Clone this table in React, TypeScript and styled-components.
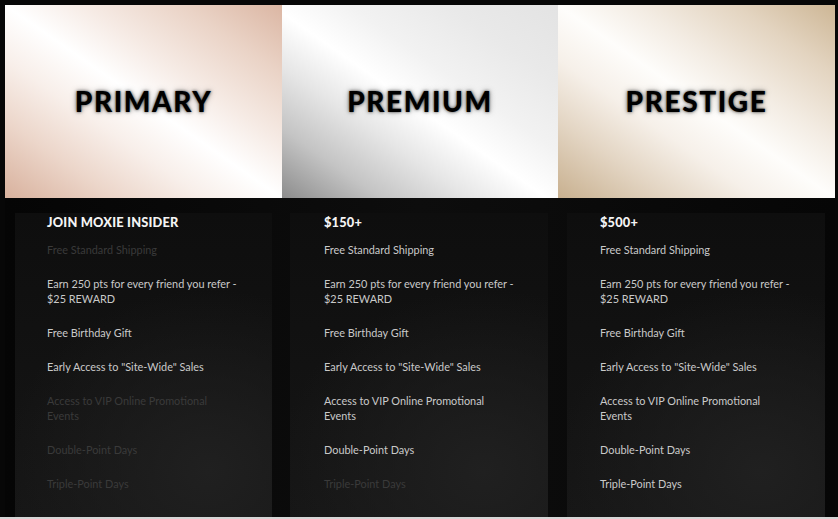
import * as React from 'react';
import styled, { createGlobalStyle } from 'styled-components';

const GlobalStyle = createGlobalStyle`
    html, body {
        margin: 0;
        padding: 0;
        background: #d6d6d6;
    }
`;

const Frame = styled.div`
    width: 838px;
    height: 517px;
    box-sizing: border-box;
    padding: 5px 3px 0 5px;
    background: #070707;
    overflow: hidden;
    display: flex;
    flex-direction: column;
`;

const Banners = styled.div`
    display: grid;
    grid-template-columns: 277px 276px 277px;
    height: 193px;
`;

const Banner = styled.div<{ $bg: string }>`
    display: flex;
    align-items: center;
    justify-content: center;
    background: ${p => p.$bg};
`;

const BannerTitle = styled.div`
    font-family: Lato, "Noto Sans", sans-serif;
    font-weight: 900;
    font-size: 28px;
    letter-spacing: 1.6px;
    color: #000;
    text-shadow: 0 0 3px rgba(0, 0, 0, 0.7), 0 0 6px rgba(0, 0, 0, 0.35);
    margin-bottom: 1px;
`;

const Cards = styled.div`
    flex: 1;
    display: grid;
    grid-template-columns: 277px 276px 277px;
    padding-top: 15px;
    background: linear-gradient(to right, #050505, #0d0d0d 50%, #060606);
`;

const CardSlot = styled.div<{ $left: number }>`
    padding-left: ${p => p.$left}px;
    padding-right: 10px;
    display: flex;
`;

const Card = styled.div<{ $pad: number }>`
    flex: 1;
    padding: 1px 10px 0 ${p => p.$pad}px;
    background:
        radial-gradient(ellipse 80% 60% at 75% 85%, #202020 0%, rgba(24, 24, 24, 0) 100%),
        linear-gradient(to bottom, #0e0e0e, #161616);
    font-family: Lato, "Noto Sans", sans-serif;
`;

const CardTitle = styled.div`
    font-weight: 900;
    font-size: 12.8px;
    letter-spacing: 0.2px;
    color: #f4f4f4;
    line-height: 16px;
    margin-bottom: 12px;
`;

const Perks = styled.ul`
    list-style: none;
    margin: 0;
    padding: 0;
    display: flex;
    flex-direction: column;
    gap: 19px;
`;

const Perk = styled.li<{ $off?: boolean }>`
    font-size: 10.9px;
    line-height: 15px;
    color: ${p => (p.$off ? '#3a3a3a' : '#c9c9c9')};
    max-width: 193px;
`;

const PERKS = [
    'Free Standard Shipping',
    'Earn 250 pts for every friend you refer - $25 REWARD',
    'Free Birthday Gift',
    'Early Access to "Site-Wide" Sales',
    'Access to VIP Online Promotional Events',
    'Double-Point Days',
    'Triple-Point Days',
];

const tiers = [
    {
        name: 'PRIMARY',
        title: 'JOIN MOXIE INSIDER',
        bg: 'linear-gradient(to top right, #d8b19d 0%, #ecd6ca 20%, #f8efea 36%, #ffffff 50%, #f6ebe5 64%, #ead3c6 82%, #dbb6a3 100%)',
        off: [0, 4, 5, 6],
        left: 10,
        pad: 32,
    },
    {
        name: 'PREMIUM',
        title: '$150+',
        bg: 'linear-gradient(to top right, #8c8c8c 0%, #c4c4c4 18%, #e6e6e6 34%, #ffffff 48%, #f2f2f2 62%, #e9e9e9 80%, #e3e3e3 100%)',
        off: [6],
        left: 8,
        pad: 34,
    },
    {
        name: 'PRESTIGE',
        title: '$500+',
        bg: 'linear-gradient(to top right, #c8b08f 0%, #e3d5c3 20%, #f6f0e9 36%, #fefdfb 50%, #f3ece3 64%, #e3d4c0 82%, #cdb695 100%)',
        off: [] as number[],
        left: 9,
        pad: 33,
    },
];

export default function App() {
    return (
        <>
            <GlobalStyle />
            <Frame>
                <Banners>
                    {tiers.map(t => (
                        <Banner key={t.name} $bg={t.bg}>
                            <BannerTitle>{t.name}</BannerTitle>
                        </Banner>
                    ))}
                </Banners>
                <Cards>
                    {tiers.map(t => (
                        <CardSlot key={t.name} $left={t.left}>
                            <Card $pad={t.pad}>
                                <CardTitle>{t.title}</CardTitle>
                                <Perks>
                                    {PERKS.map((perk, i) => (
                                        <Perk key={perk} $off={t.off.includes(i)}>
                                            {perk}
                                        </Perk>
                                    ))}
                                </Perks>
                            </Card>
                        </CardSlot>
                    ))}
                </Cards>
            </Frame>
        </>
    );
}
